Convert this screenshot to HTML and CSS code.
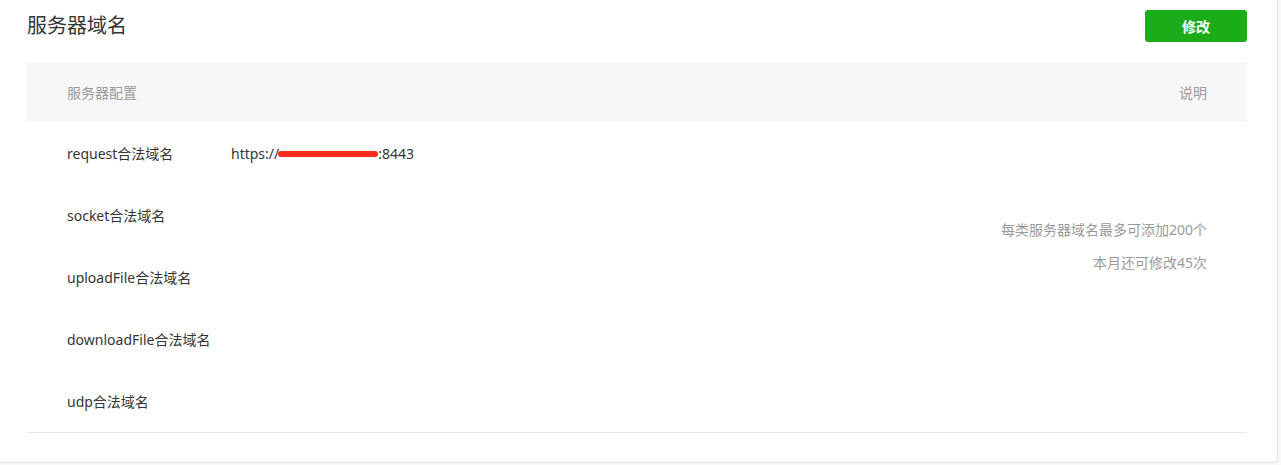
FILE: index.html
```html
<!DOCTYPE html>
<html lang="zh-CN">
<head>
<meta charset="utf-8">
<title>服务器域名</title>
<link rel="stylesheet" href="styles.css">
</head>
<body>
<div class="card">
  <div class="head">
    <h2 class="title">服务器域名</h2>
    <button class="btn">修改</button>
  </div>
  <div class="table">
    <div class="thead">
      <span>服务器配置</span>
      <span>说明</span>
    </div>
    <div class="tbody">
      <div class="rows">
        <div class="row"><span class="label">request合法域名</span><span class="value">https://<span class="redact"></span>:8443</span></div>
        <div class="row"><span class="label">socket合法域名</span></div>
        <div class="row"><span class="label">uploadFile合法域名</span></div>
        <div class="row"><span class="label">downloadFile合法域名</span></div>
        <div class="row"><span class="label">udp合法域名</span></div>
      </div>
      <div class="notes">
        <p>每类服务器域名最多可添加200个</p>
        <p>本月还可修改45次</p>
      </div>
    </div>
  </div>
</div>
</body>
</html>
```

FILE: styles.css
```css
html, body {
  margin: 0;
  padding: 0;
}
body {
  background: #f7f8fa;
  font-family: "Noto Sans", "Noto Sans CJK SC", sans-serif;
  font-size: 14px;
  color: #353535;
}
.card {
  box-sizing: border-box;
  width: 1278px;
  height: 463px;
  background: #fff;
  border-right: 1px solid #e4e5e8;
  border-bottom: 1px solid #e4e5e8;
  border-bottom-right-radius: 4px;
  box-shadow: 0 1px 2px rgba(0,0,0,0.04);
  padding: 10px 30px 0 27px;
}
.head {
  display: flex;
  justify-content: space-between;
  align-items: center;
  height: 32px;
}
.title {
  margin: 0;
  font-size: 20px;
  font-weight: 400;
  color: #353535;
  line-height: 32px;
}
.btn {
  width: 102px;
  height: 32px;
  border: 0;
  border-radius: 3px;
  background: #1aad19;
  color: #fff;
  font-family: inherit;
  font-size: 14px;
  font-weight: 700;
  padding: 0;
}
.table {
  margin-top: 20px;
  border-bottom: 1px solid #e7e7eb;
}
.thead {
  display: flex;
  justify-content: space-between;
  align-items: center;
  height: 60px;
  padding: 0 40px;
  background: #f6f7f9;
  color: #9a9a9a;
}
.tbody {
  display: flex;
  justify-content: space-between;
  padding: 0 40px;
}
.row {
  display: flex;
  align-items: center;
  height: 62px;
}
.label {
  width: 164px;
}
.value {
  display: inline-flex;
  align-items: center;
}
.redact {
  display: inline-block;
  width: 100px;
  height: 6px;
  margin: 2px 0 0 -1px;
  background: #ff2a1a;
  border-radius: 3px;
}
.notes {
  padding-top: 91px;
  text-align: right;
  color: #9a9a9a;
}
.notes p {
  margin: 0;
  line-height: 33px;
}
```
